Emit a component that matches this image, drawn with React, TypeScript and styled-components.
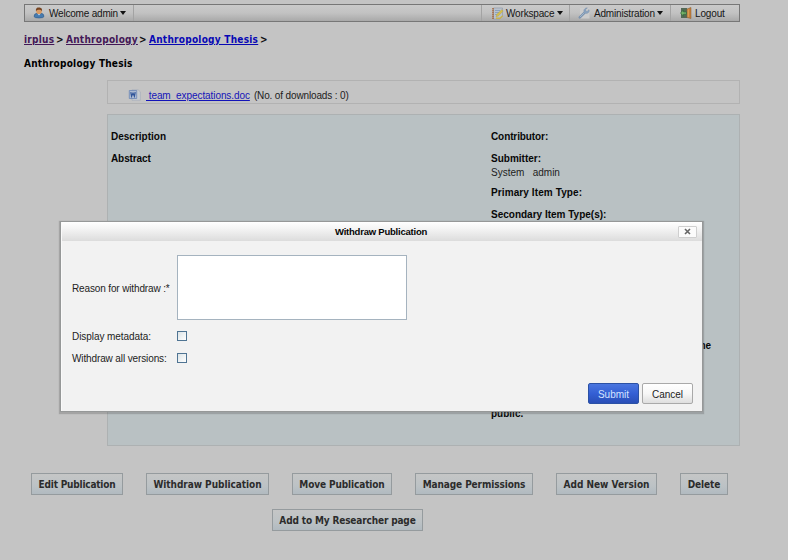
import React from 'react';
import styled, { createGlobalStyle } from 'styled-components';

const Global = createGlobalStyle`
  * { box-sizing: border-box; }
  body { margin: 0; background: #c4c4c4; overflow: hidden; }
`;

const sans = '"Liberation Sans", Arial, sans-serif';
const wide = '"DejaVu Sans Condensed", "DejaVu Sans", sans-serif';

const Page = styled.div`
  position: relative;
  width: 788px;
  height: 560px;
  padding: 4px 48px 0 24px;
  overflow: hidden;
  background: #c4c4c4;
  color: #1c1c1c;
  font: 10px/12px ${sans};
  white-space: pre;
`;

const Text = styled.span<{ $track?: number }>`
  padding-top: 2px;
  letter-spacing: ${p => p.$track ?? 0}px;
`;

const Toolbar = styled.nav`
  display: flex;
  height: 18px;
  border: 1px solid #777;
  background: linear-gradient(#cacaca, #c2c2c2 50%, #a9a9a9);
`;

const MenuItem = styled.div<{ $width: number; $side?: 'left' | 'right'; $pad: number }>`
  display: flex;
  align-items: center;
  width: ${p => p.$width}px;
  padding-left: ${p => p.$pad}px;
  border-left: ${p => (p.$side === 'left' ? '1px solid #a3a3a3' : 'none')};
  border-right: ${p => (p.$side === 'right' ? '1px solid #a3a3a3' : 'none')};
  color: #151515;
  svg { flex: none; }
`;

const IconSlot = styled.span<{ $gap: number }>`
  display: flex;
  margin-right: ${p => p.$gap}px;
`;

const Caret = styled.i`
  margin-left: 2.5px;
  border: 3px solid transparent;
  border-top: 4px solid #111;
  border-bottom: 0;
`;

const Spacer = styled.div`
  flex: 1;
`;

const Crumbs = styled.div`
  display: flex;
  margin-top: 11px;
  height: 13px;
  font: bold 10px/13px ${wide};
  color: #111;
`;

const CrumbLink = styled.a<{ $visited?: boolean; $width: number }>`
  width: ${p => p.$width}px;
  margin-right: 2px;
  color: ${p => (p.$visited ? '#431756' : '#0808b4')};
  letter-spacing: 0.25px;
  text-decoration: underline;
`;

const Divider = styled.span`
  width: 8px;
  margin-right: 2px;
`;

const Title = styled.h1`
  margin: 11px 0 0;
  height: 13px;
  font: bold 10px/13px ${wide};
  letter-spacing: 0.22px;
  color: #000;
`;

const FileBox = styled.div`
  display: flex;
  align-items: center;
  width: 633px;
  height: 24px;
  margin: 10px 0 0 83px;
  padding: 6px 0 0 20px;
  border: 1px solid #b2b2b2;
`;

const FileLink = styled.a`
  margin: 0 4px 0 4px;
  padding-top: 2px;
  color: #1414b8;
  text-decoration: underline;
  letter-spacing: -0.08px;
`;

const Details = styled.section`
  display: grid;
  grid-template-columns: 380px 1fr;
  width: 633px;
  height: 332px;
  margin: 10px 0 0 83px;
  padding: 16px 3px 0;
  border: 1px solid #adb1b2;
  background: #b9c1c3;
`;

const Column = styled.div``;

const Field = styled.div<{ $height: number; $indent?: number }>`
  height: ${p => p.$height}px;
  padding-left: ${p => p.$indent ?? 0}px;
  color: #222;
`;

const Label = styled.div<{ $track?: number }>`
  height: 14px;
  font-weight: bold;
  color: #080808;
  letter-spacing: ${p => p.$track ?? 0}px;
`;

const Actions = styled.div`
  display: flex;
  gap: 23px;
  margin: 27px 0 0 7px;
`;

const SecondRow = styled(Actions)`
  margin: 14px 0 0 248px;
`;

const Action = styled.button<{ $width: number; $track: number }>`
  width: ${p => p.$width}px;
  height: 22px;
  padding: 1px 0 0;
  border: 1px solid #959b9e;
  background: linear-gradient(#c5c6c6, #bcc2c5 60%, #b1bac0);
  color: #2c2c2c;
  font: bold 10px/12px ${wide};
  letter-spacing: ${p => p.$track}px;
  white-space: nowrap;
`;

const Dialog = styled.div`
  position: absolute;
  left: 61px;
  top: 222px;
  width: 641px;
  height: 189px;
  border-left: 1px solid #fafafa;
  background: #f2f2f2;
  box-shadow: 0 0 0 1px #969898, 0 1px 1px 2px rgba(90, 90, 90, 0.3);
`;

const DialogHeader = styled.header`
  display: grid;
  grid-template-columns: 1fr 94px 1fr;
  align-items: center;
  height: 19px;
  background: linear-gradient(#fff, #f4f4f4 35%, #dcdcdc);
  color: #050505;
  font-weight: bold;
`;

const DialogTitle = styled.span`
  grid-column: 2;
  font-size: 9.5px;
  letter-spacing: -0.22px;
`;

const Close = styled.button`
  display: flex;
  align-items: center;
  justify-content: center;
  justify-self: end;
  width: 19px;
  height: 12px;
  margin-right: 5px;
  padding: 0;
  border: 1px solid #cfcfcf;
  border-radius: 1px;
  background: #fbfbfb;
`;

const Form = styled.div`
  display: grid;
  grid-template-columns: 105px 1fr;
  grid-template-rows: 65px 32px 11px;
  align-items: center;
  padding: 14px 0 0 10px;
  color: #222;
`;

const Reason = styled.textarea`
  display: block;
  width: 230px;
  height: 65px;
  border: 1px solid #a5b3bf;
  background: #fff;
  resize: none;
`;

const Check = styled.input.attrs({ type: 'checkbox' })`
  appearance: none;
  width: 10px;
  height: 10px;
  margin: 0;
  border: 1px solid #4f7493;
  background: linear-gradient(135deg, #dce4e7, #fff);
`;

const Footer = styled.footer`
  display: flex;
  justify-content: flex-end;
  gap: 3px;
  margin: 20px 9px 0 0;
`;

const DialogButton = styled.button<{ $primary?: boolean }>`
  width: 51px;
  height: 21px;
  padding: 2px 0 0;
  border: 1px solid ${p => (p.$primary ? '#2b51a5' : '#a9a9a9')};
  border-radius: 2px;
  background: ${p => (p.$primary ? 'linear-gradient(#4a76df, #345fd4 50%, #294eb6)' : 'linear-gradient(#fff, #f7f7f7 50%, #dedede)')};
  color: ${p => (p.$primary ? '#d5e2ff' : '#222')};
  font: 10px/12px ${sans};
`;

const UserIcon = () => (
  <svg width="12" height="12" viewBox="0 0 12 12">
    <path d="M1 9.5Q1 6.5 4 6.3h4Q11 6.5 11 9.5Q10.5 11 6 11T1 9.5Z" fill="#477baf" stroke="#315b86" strokeWidth=".6" />
    <path d="M4.5 6.5 6 8.5 7.5 6.5Z" fill="#cfddea" />
    <circle cx="6" cy="4.2" r="2.8" fill="#d99a62" />
    <path d="M3 4.3C2.5 1 4.2.4 6 .4s3.5.7 3 3.9C8.4 2.8 7 2.8 6 2.8S3.6 2.8 3 4.3Z" fill="#764421" />
  </svg>
);

const WorkspaceIcon = () => (
  <svg width="12" height="13" viewBox="0 0 12 13">
    <path d="M1.5 1h9v8.2L8 12H1.5Z" fill="#b9c2ce" stroke="#8c96a4" strokeWidth=".6" />
    <path d="M1 1v11" stroke="#a4663b" strokeWidth="1.5" strokeDasharray="1.4 .6" />
    <path d="M3 3.5h5M3 5.5h4M3 7.5h3" stroke="#7994b4" strokeWidth=".7" />
    <path d="m4 9.8.8-2.5L9.7 2.7l1.5 1.4-5 4.9Z" fill="#d6c04a" stroke="#a08c3c" strokeWidth=".3" />
    <path d="M4 11.2h4l2.7-2.4" stroke="#cab34b" strokeWidth="1.4" fill="none" />
  </svg>
);

const WrenchIcon = () => (
  <svg width="12" height="12" viewBox="0 0 12 12">
    <path d="M2 1h9.5v10.5H2Z" fill="#cccccc" />
    <path d="M1.8 10.4 6.4 5.8" stroke="#7890ad" strokeWidth="2.4" strokeLinecap="round" />
    <path d="M9.3.9 7.5 2.7l.2 1.5 1.5.2L11 2.7C11.8 5.3 9.3 7 7.3 6.1 5.1 5.1 5.4.9 9.3.9Z" fill="#8ba5c1" stroke="#7890ad" strokeWidth=".6" />
    <path d="M2 10.1 6.5 5.6" stroke="#a8bed3" strokeWidth=".9" />
  </svg>
);

const LogoutIcon = () => (
  <svg width="12" height="12" viewBox="0 0 12 12">
    <path d="M1 1h6v10H1Z" fill="#536955" />
    <path d="m7 2 4-1.5v11L7 10.5Z" fill="#c6803c" stroke="#85582d" strokeWidth=".5" />
    <path d="M8.2 2.4v7.5" stroke="#dfaa60" />
    <path d="m.5 6 3-3v2h3v2.2h-3v2Z" fill="#77b469" stroke="#32683a" strokeWidth=".7" />
  </svg>
);

const WordIcon = () => (
  <svg width="14" height="12" viewBox="0 0 14 12">
    <path d="M4 .7h6l2.4 2.2v8.4H4Z" fill="#c6cbd1" stroke="#a9afba" strokeWidth=".7" />
    <path d="M1.3 1.5h7.4v8H1.3Z" fill="#adbbd2" stroke="#6c87b5" strokeWidth=".8" />
    <path d="m2.8 3.2.8 4L5 4.1l1.4 3.1.8-4" stroke="#31559a" strokeWidth="1.2" fill="none" />
  </svg>
);

const actions = [
  { name: 'Edit Publication', width: 92, track: -0.2 },
  { name: 'Withdraw Publication', width: 123, track: -0.05 },
  { name: 'Move Publication', width: 100, track: -0.12 },
  { name: 'Manage Permissions', width: 118, track: -0.11 },
  { name: 'Add New Version', width: 101, track: 0 },
  { name: 'Delete', width: 48, track: -0.1 },
];

export default function App() {
  return (
    <Page>
      <Global />
      <Toolbar>
        <MenuItem $width={109} $side="right" $pad={8}>
          <IconSlot $gap={4}><UserIcon /></IconSlot>
          <Text $track={-0.2}>Welcome admin</Text><Caret />
        </MenuItem>
        <Spacer />
        <MenuItem $width={88} $side="left" $pad={10}>
          <IconSlot $gap={2}><WorkspaceIcon /></IconSlot>
          <Text $track={-0.17}>Workspace</Text><Caret />
        </MenuItem>
        <MenuItem $width={101} $side="left" $pad={8}>
          <IconSlot $gap={4}><WrenchIcon /></IconSlot>
          <Text $track={-0.18}>Administration</Text><Caret />
        </MenuItem>
        <MenuItem $width={69} $side="left" $pad={9}>
          <IconSlot $gap={3}><LogoutIcon /></IconSlot>
          <Text $track={-0.15}>Logout</Text>
        </MenuItem>
      </Toolbar>

      <Crumbs>
        <CrumbLink $visited $width={30}>irplus</CrumbLink><Divider>&gt;</Divider>
        <CrumbLink $visited $width={71}>Anthropology</CrumbLink><Divider>&gt;</Divider>
        <CrumbLink $width={109}>Anthropology Thesis</CrumbLink><Divider>&gt;</Divider>
      </Crumbs>
      <Title>Anthropology Thesis</Title>

      <FileBox>
        <WordIcon />
        <FileLink>{' team_expectations.doc'}</FileLink>
        <Text $track={-0.14}>(No. of downloads : 0)</Text>
      </FileBox>

      <Details>
        <Column>
          <Field $height={22}><Label>Description</Label></Field>
          <Field $height={22}><Label $track={-0.1}>Abstract</Label></Field>
        </Column>
        <Column>
          <Field $height={22}><Label $track={-0.1}>Contributor:</Label></Field>
          <Field $height={34}><Label>Submitter:</Label>System   admin</Field>
          <Field $height={22}><Label $track={0.1}>Primary Item Type:</Label></Field>
          <Field $height={131}><Label>Secondary Item Type(s):</Label></Field>
          <Field $height={68} $indent={194}><Label>name</Label></Field>
          <Field $height={14}><Label>public.</Label></Field>
        </Column>
      </Details>

      <Actions>
        {actions.map(a => <Action key={a.name} $width={a.width} $track={a.track}>{a.name}</Action>)}
      </Actions>
      <SecondRow>
        <Action $width={151} $track={-0.15}>Add to My Researcher page</Action>
      </SecondRow>

      <Dialog role="dialog">
        <DialogHeader>
          <DialogTitle>Withdraw Publication</DialogTitle>
          <Close aria-label="Close">
            <svg width="7" height="7" viewBox="0 0 7 7">
              <path d="m1 1 5 5M6 1 1 6" stroke="#666" strokeWidth="1.6" />
            </svg>
          </Close>
        </DialogHeader>
        <Form>
          <Text $track={-0.14}>Reason for withdraw :*</Text><Reason />
          <Text $track={-0.06}>Display metadata:</Text><Check />
          <Text $track={-0.12}>Withdraw all versions:</Text><Check />
        </Form>
        <Footer>
          <DialogButton $primary>Submit</DialogButton>
          <DialogButton>Cancel</DialogButton>
        </Footer>
      </Dialog>
    </Page>
  );
}
